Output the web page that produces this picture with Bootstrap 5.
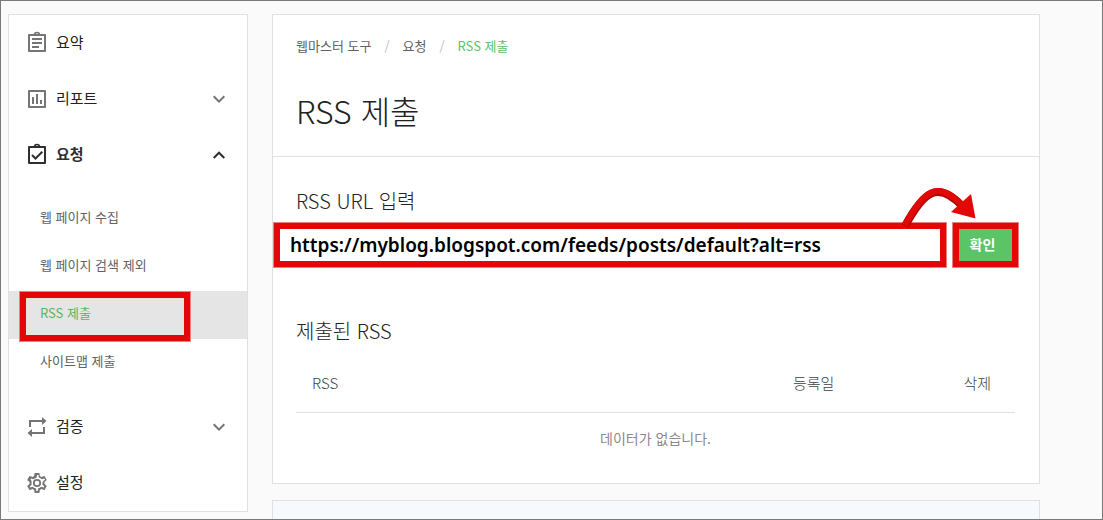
<!DOCTYPE html>
<html lang="ko">
<head>
<meta charset="utf-8">
<meta name="viewport" content="width=device-width, initial-scale=1">
<title>RSS 제출</title>
<link href="https://cdn.jsdelivr.net/npm/bootstrap@5.3.0/dist/css/bootstrap.min.css" rel="stylesheet">
<style>
  :root { --line: #e0e0e0; --green: #5ac467; --red: #e30808; }
  body { font-family: "Noto Sans CJK KR", sans-serif; font-size: 14px; line-height: 20px; color: #222; background: #fafafa; }
  .page-frame { height: 100vh; border: 1px solid #7b7a7b; padding: 13px 62px 0 7px; }
  .panel { background: #fff; border: 1px solid var(--line); }
  .side { width: 240px; }
  .side a { text-decoration: none; }
  .side-link { height: 56px; padding: 0 16px; font-size: 15px; color: #222; }
  .side-link span { margin-left: 7px; padding-bottom: 2px; }
  .side-link svg { flex: none; color: #757575; }
  .side-link.current, .side-link.current svg { color: #2f2f2f; }
  .side-link.current { font-weight: 700; }
  .side-sub { padding: 12px 0; }
  .side-sub a { height: 48px; padding: 0 31px 4px; font-size: 13px; color: #616161; }
  .side-sub a.active { background: #e5e5e5; color: #56b563; }
  .red-box { border: 7px solid var(--red); outline: 1px solid #e98080; outline-offset: -1px; }
  .side-mark { top: 0; left: 10px; right: 56px; height: 51px; }
  .crumb { font-size: 13px; }
  .crumb a, .crumb span { color: #616161; text-decoration: none; }
  .crumb .here { color: var(--green); }
  .crumb .sep { color: #bdbdbd; margin: 0 13px; }
  .head { padding: 21px 23px 22px; border-bottom: 1px solid var(--line); }
  h1 { font-size: 32px; line-height: 48px; font-weight: 300; margin: 30px 0 0; }
  h2, .field-label { font-size: 20px; line-height: 30px; font-weight: 300; margin: 0; display: block; }
  .panel-main { padding: 29px 24px 0 23px; }
  .url-form { margin: 6px -4px 0 -23px; gap: 5px; }
  .url-form input { height: 32px; width: 100%; border: 0; border-radius: 0; padding: 0 10px; color: #000; font: 600 19px/32px "Noto Sans", sans-serif; }
  .url-form button { height: 32px; width: 53px; border: 0; padding: 0 6px 2px 0; background: var(--green); color: #fff; font-weight: 700; font-size: 14px; line-height: 28px; }
  .arrow-mark { right: 36px; top: -38px; pointer-events: none; }
  .sent { margin-top: 48px; }
  .sent th { font-weight: 300; color: #424242; padding: 27px 16px 19px; line-height: 20px; font-size: 15px; border-bottom: 1px solid var(--line); }
  .sent .col-date { width: 22%; }
  .sent .col-del { width: 17%; }
  .sent td { color: #8a8a8a; padding: 15px 16px 35px; text-align: center; }
  .info { background: #f6fafd; height: 80px; }
</style>
</head>
<body>
<div class="page-frame d-flex align-items-start gap-4 overflow-hidden">
  <nav class="panel side flex-shrink-0" aria-label="메뉴">
    <a href="#" class="side-link d-flex align-items-center">
      <svg width="24" height="24" viewBox="0 0 24 24" fill="none" stroke="currentColor" stroke-width="2"><path d="M4 4h16v16H4z" stroke-linejoin="round"/><path d="M9.5 4a2.5 2.5 0 0 1 5 0" stroke-width="1.6"/><path d="M7 8h10M7 12h10M7 16h7"/></svg>
      <span>요약</span>
    </a>
    <a href="#" class="side-link d-flex align-items-center">
      <svg width="24" height="24" viewBox="0 0 24 24" fill="none" stroke="currentColor" stroke-width="2"><path d="M4 4h16v16H4z" stroke-linejoin="round"/><path d="M8 10v7M12 7v10M16 13v4"/></svg>
      <span>리포트</span>
      <svg class="ms-auto" width="24" height="24" viewBox="0 0 24 24" fill="none" stroke="currentColor" stroke-width="2"><path d="M6.7 9.300l5.300 5.300 5.300-5.300"/></svg>
    </a>
    <a href="#" class="side-link current d-flex align-items-center" aria-expanded="true">
      <svg width="24" height="24" viewBox="0 0 24 24" fill="none" stroke="currentColor" stroke-width="2"><path d="M4 4h16v16H4z" stroke-linejoin="round"/><path d="M9.500 4a2.500 2.500 0 0 1 5 0" stroke-width="1.600"/><path d="M7 12l3.500 3.500L17.300 8.700"/></svg>
      <span>요청</span>
      <svg class="ms-auto" width="24" height="24" viewBox="0 0 24 24" fill="none" stroke="currentColor" stroke-width="2"><path d="M6.700 15l5.300-5.300 5.300 5.300"/></svg>
    </a>
    <div class="side-sub">
      <a href="#" class="d-flex align-items-center">웹 페이지 수집</a>
      <a href="#" class="d-flex align-items-center">웹 페이지 검색 제외</a>
      <div class="position-relative">
        <a href="#" class="active d-flex align-items-center">RSS 제출</a>
        <div class="side-mark red-box position-absolute"></div>
      </div>
      <a href="#" class="d-flex align-items-center">사이트맵 제출</a>
    </div>
    <a href="#" class="side-link d-flex align-items-center">
      <svg width="24" height="24" viewBox="0 0 24 24" fill="currentColor"><path d="M4 5h13V2l4.500 4-4.500 4V7H6v5H4zM20 19H7v3l-4.500-4L7 14v3h11v-5h2z"/></svg>
      <span>검증</span>
      <svg class="ms-auto" width="24" height="24" viewBox="0 0 24 24" fill="none" stroke="currentColor" stroke-width="2"><path d="M6.700 9.300l5.300 5.300 5.300-5.300"/></svg>
    </a>
    <a href="#" class="side-link d-flex align-items-center">
      <svg width="24" height="24" viewBox="0 0 24 24" fill="currentColor"><path d="M19.430 12.980c.040-.320.070-.640.070-.980s-.030-.660-.070-.980l2.110-1.650c.190-.150.240-.420.120-.640l-2-3.460c-.090-.160-.260-.250-.440-.250-.060 0-.120.010-.170.030l-2.490 1c-.520-.400-1.080-.730-1.690-.980l-.380-2.650C14.460 2.180 14.250 2 14 2h-4c-.250 0-.460.180-.490.420l-.380 2.650c-.610.250-1.170.590-1.690.980l-2.490-1c-.060-.020-.120-.030-.180-.030-.170 0-.340.090-.430.250l-2 3.460c-.130.220-.070.490.120.640l2.110 1.650c-.040.320-.070.650-.070.980s.030.660.070.980l-2.110 1.650c-.190.150-.240.420-.120.640l2 3.460c.090.160.260.250.440.250.060 0 .120-.010.170-.030l2.490-1c.520.400 1.080.730 1.690.980l.380 2.650c.030.240.240.420.490.420h4c.250 0 .460-.180.490-.420l.380-2.650c.610-.250 1.170-.590 1.690-.980l2.490 1c.060.020.120.030.180.030.170 0 .340-.090.430-.250l2-3.460c.120-.220.070-.490-.120-.640l-2.110-1.650zm-1.980-1.710c.040.310.050.520.050.730s-.020.430-.050.730l-.140 1.130.89.700 1.080.840-.700 1.210-1.270-.510-1.040-.420-.9.680c-.430.320-.840.560-1.250.730l-1.060.430-.160 1.130-.2 1.350h-1.400l-.350-2.480-1.060-.430c-.430-.180-.830-.410-1.230-.710l-.910-.7-1.060.430-1.270.510-.7-1.210 1.970-1.540-.140-1.130c-.030-.310-.050-.540-.050-.740s.020-.430.050-.730l.140-1.130L5.510 8.600l.7-1.210 2.310.94.9-.68c.430-.320.840-.560 1.250-.730l1.060-.430.350-2.480h1.390l.35 2.480 1.060.430c.430.180.830.410 1.230.710l.91.7 2.330-.94.7 1.210-1.960 1.540z"/><circle cx="12" cy="12" r="3.200" fill="none" stroke="currentColor" stroke-width="1.800"/></svg>
      <span>설정</span>
    </a>
  </nav>

  <main class="flex-grow-1">
    <section class="panel">
      <header class="head">
        <nav class="crumb d-flex" aria-label="경로">
          <a href="#">웹마스터 도구</a><span class="sep">/</span><a href="#">요청</a><span class="sep">/</span><a href="#" class="here">RSS 제출</a>
        </nav>
        <h1>RSS 제출</h1>
      </header>
      <div class="panel-main">
        <label class="field-label" for="url">RSS URL 입력</label>
        <form class="url-form d-flex position-relative">
          <div class="red-box flex-grow-1"><input id="url" type="text" class="d-block" value="https://myblog.blogspot.com/feeds/posts/default?alt=rss"></div>
          <div class="red-box"><button type="button" class="d-block">확인</button></div>
          <svg class="arrow-mark position-absolute" width="84" height="48" viewBox="0 0 84 48"><path d="M6 42C24 9 38-5 64 23" fill="none" stroke="#b00606" stroke-width="8"/><path d="M6 41C24 8 38-6 64 22" fill="none" stroke="#e30808" stroke-width="6"/><path d="M72 10L76.500 34.500L52 28Z" fill="#e30808"/></svg>
        </form>
        <div class="sent">
          <h2>제출된 RSS</h2>
          <table class="w-100">
            <thead><tr><th>RSS</th><th class="col-date text-center">등록일</th><th class="col-del text-end"><span class="pe-2">삭제</span></th></tr></thead>
            <tbody><tr><td colspan="3">데이터가 없습니다.</td></tr></tbody>
          </table>
        </div>
      </div>
    </section>
    <section class="panel info mt-3"></section>
  </main>
</div>
<script src="https://cdn.jsdelivr.net/npm/bootstrap@5.3.0/dist/js/bootstrap.bundle.min.js"></script>
</body>
</html>
